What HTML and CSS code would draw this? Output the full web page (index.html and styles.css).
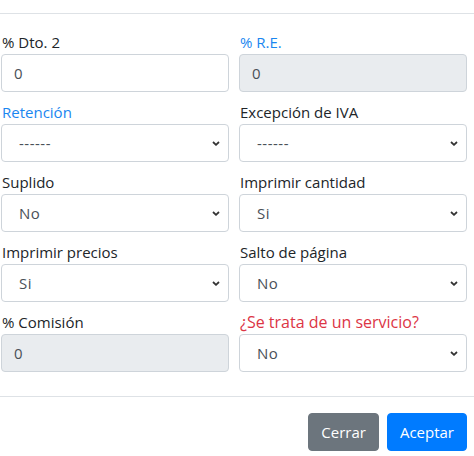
FILE: index.html
```html
<!DOCTYPE html>
<html lang="es">
<head>
<meta charset="utf-8">
<link rel="stylesheet" href="styles.css">
</head>
<body>
<div class="modal-header"></div>
<form class="modal-body">
  <div class="form-group">
    <label class="label">% Dto. 2</label>
    <input class="control" type="text" value="0">
  </div>
  <div class="form-group">
    <label class="label label-blue">% R.E.</label>
    <input class="control" type="text" value="0" disabled>
  </div>
  <div class="form-group">
    <label class="label label-blue">Retención</label>
    <div class="select-wrap">
      <select class="control select"><option>------</option></select>
      <svg class="chevron" width="8" height="5" viewBox="0 0 8 5"><path d="M1 1l3 2.8L7 1" fill="none" stroke="#333" stroke-width="1.8"/></svg>
    </div>
  </div>
  <div class="form-group">
    <label class="label">Excepción de IVA</label>
    <div class="select-wrap">
      <select class="control select"><option>------</option></select>
      <svg class="chevron" width="8" height="5" viewBox="0 0 8 5"><path d="M1 1l3 2.8L7 1" fill="none" stroke="#333" stroke-width="1.8"/></svg>
    </div>
  </div>
  <div class="form-group">
    <label class="label">Suplido</label>
    <div class="select-wrap">
      <select class="control select"><option>No</option></select>
      <svg class="chevron" width="8" height="5" viewBox="0 0 8 5"><path d="M1 1l3 2.8L7 1" fill="none" stroke="#333" stroke-width="1.8"/></svg>
    </div>
  </div>
  <div class="form-group">
    <label class="label">Imprimir cantidad</label>
    <div class="select-wrap">
      <select class="control select"><option>Si</option></select>
      <svg class="chevron" width="8" height="5" viewBox="0 0 8 5"><path d="M1 1l3 2.8L7 1" fill="none" stroke="#333" stroke-width="1.8"/></svg>
    </div>
  </div>
  <div class="form-group">
    <label class="label">Imprimir precios</label>
    <div class="select-wrap">
      <select class="control select"><option>Si</option></select>
      <svg class="chevron" width="8" height="5" viewBox="0 0 8 5"><path d="M1 1l3 2.8L7 1" fill="none" stroke="#333" stroke-width="1.8"/></svg>
    </div>
  </div>
  <div class="form-group">
    <label class="label">Salto de página</label>
    <div class="select-wrap">
      <select class="control select"><option>No</option></select>
      <svg class="chevron" width="8" height="5" viewBox="0 0 8 5"><path d="M1 1l3 2.8L7 1" fill="none" stroke="#333" stroke-width="1.8"/></svg>
    </div>
  </div>
  <div class="form-group">
    <label class="label">% Comisión</label>
    <input class="control" type="text" value="0" disabled>
  </div>
  <div class="form-group">
    <label class="label label-red">¿Se trata de un servicio?</label>
    <div class="select-wrap">
      <select class="control select"><option>No</option></select>
      <svg class="chevron" width="8" height="5" viewBox="0 0 8 5"><path d="M1 1l3 2.8L7 1" fill="none" stroke="#333" stroke-width="1.8"/></svg>
    </div>
  </div>
</form>
<div class="modal-footer">
  <button class="btn btn-secondary" type="button">Cerrar</button>
  <button class="btn btn-primary" type="button">Aceptar</button>
</div>
</body>
</html>
```
FILE: styles.css
```css
* { box-sizing: border-box; }
body {
  margin: 0;
  font-family: "Open Sans", "Noto Sans", sans-serif;
  font-size: 15px;
  line-height: 1.5;
  color: #212529;
  background: #fff;
}
.modal-header {
  height: 14px;
  border-bottom: 1px solid #dee2e6;
}
.modal-body {
  display: grid;
  grid-template-columns: 228px 228px;
  column-gap: 10px;
  row-gap: 8px;
  padding: 16px 7px 24px 1px;
  margin: 0;
}
.form-group {
  display: flex;
  flex-direction: column;
}
.label {
  display: block;
  height: 24px;
  line-height: 24px;
  padding-left: 1px;
  white-space: nowrap;
}
.label-blue { color: #1a86f0; }
.label-red {
  color: #dc3545;
  font-size: 16px;
}
.control {
  display: block;
  width: 100%;
  height: 38px;
  padding: 6px 12px;
  font-family: inherit;
  font-size: 15px;
  line-height: 24px;
  color: #495057;
  background: #fff;
  border: 1px solid #ced4da;
  border-radius: 4px;
  outline: none;
}
.control:disabled {
  background: #e9ecef;
  color: #495057;
  opacity: 1;
}
.select-wrap { position: relative; }
.select {
  appearance: none;
  -webkit-appearance: none;
  padding-left: 17px;
  padding-right: 28px;
  letter-spacing: 0.5px;
}
.chevron {
  position: absolute;
  right: 9px;
  top: 17px;
  pointer-events: none;
}
.modal-footer {
  display: flex;
  justify-content: flex-end;
  gap: 8px;
  padding: 16px 7px 0 0;
  border-top: 1px solid #dee2e6;
}
.btn {
  height: 38px;
  padding: 6px 12px;
  font-family: inherit;
  font-size: 15px;
  line-height: 24px;
  color: #fff;
  border: 1px solid transparent;
  border-radius: 4px;
}
.btn-secondary { background: #6c757d; border-color: #6c757d; }
.btn-primary { background: #007bff; border-color: #007bff; }
```
